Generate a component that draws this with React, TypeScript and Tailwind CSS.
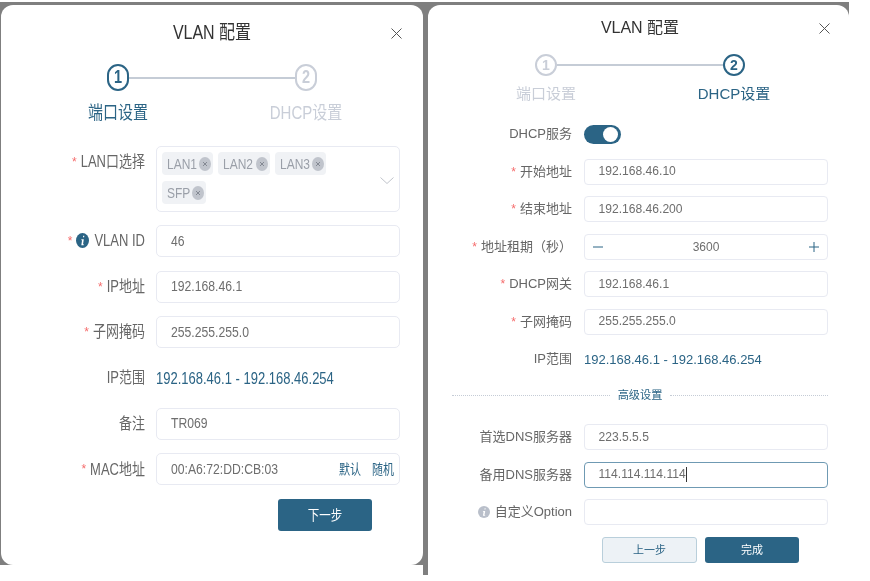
import React from "react";

const P = "text-[#2b6485]";

function Tall({ children }: { children: React.ReactNode }) {
  return <span className="inline-block scale-y-[1.22]">{children}</span>;
}

function Close({ className }: { className: string }) {
  return (
    <svg viewBox="0 0 11 11" className={`w-[11px] h-[11px] justify-self-end ${className}`} fill="none" stroke="#555" strokeWidth="1">
      <path d="M0.5 0.5L10.5 10.5M10.5 0.5L0.5 10.5" />
    </svg>
  );
}

function Star() {
  return <span className="text-[#f56c6c] text-[12px] mr-[4px]">*</span>;
}

function Info({ on, tall }: { on?: boolean; tall?: boolean }) {
  return (
    <svg viewBox="0 0 12 12" preserveAspectRatio="none" className={`${tall ? "w-[13px] h-[15px]" : "w-[12px] h-[12px]"} mr-[5px] shrink-0`}>
      <circle cx="6" cy="6" r="6" fill={on ? "#2b6485" : "#b9bfca"} />
      <path d="M6.6 2.2h1.1l-.2 1.2H6.4zM5 5h2.2L6.5 9h.7l-.1.8H4.9L5.6 5.8H4.9z" fill="#fff" />
    </svg>
  );
}

function Tag({ t, w }: { t: string; w: string }) {
  return (
    <div className={`${w} h-[23px] rounded-[4px] bg-[#f0f2f5] flex items-center justify-between pl-[5px] pr-[2px] text-[12px] text-[#9a9fa8]`}>
      <Tall>{t}</Tall>
      <svg viewBox="0 0 12 14" className="w-[12px] h-[14px]">
        <ellipse cx="6" cy="7" rx="6" ry="7" fill="#c0c4cc" />
        <path d="M4 5l4 4M8 5l-4 4" stroke="#7d828c" strokeWidth="0.9" />
      </svg>
    </div>
  );
}

function Row1({ label, star, info, children }: { label: string; star?: boolean; info?: boolean; children: React.ReactNode }) {
  return (
    <div className="h-[45.7px] flex items-center">
      <div className="w-[144px] flex items-center justify-end text-[13px] text-[#666] shrink-0">
        {star && <Star />}
        {info && <Info on tall />}
        <Tall>{label}</Tall>
      </div>
      <div className="ml-[11px] w-[244px]">{children}</div>
    </div>
  );
}

function Input1({ v, children }: { v: string; children?: React.ReactNode }) {
  return (
    <div className="h-[32px] rounded-[5px] border border-[#e8eaf2] bg-white flex items-center justify-between pl-[14px] pr-[5px] text-[12.2px] text-[#6e6e6e]">
      <Tall>{v}</Tall>
      {children}
    </div>
  );
}

function Row2({ label, star, info, children }: { label: string; star?: boolean; info?: boolean; children: React.ReactNode }) {
  return (
    <div className="h-[37.5px] flex items-center">
      <div className="w-[144px] flex items-center justify-end text-[13px] text-[#666] shrink-0">
        {star && <Star />}
        {info && <Info />}
        <span>{label}</span>
      </div>
      <div className="ml-[12px] w-[244px]">{children}</div>
    </div>
  );
}

function Input2({ v, focus }: { v?: string; focus?: boolean }) {
  return (
    <div className={`h-[26px] rounded-[4px] border ${focus ? "border-[#6f9ab3]" : "border-[#e8eaf2]"} bg-white flex items-center pl-[13.5px] text-[12.1px] text-[#6e6e6e]`}>
      <span>{v}</span>
      {focus && <span className="w-px h-[15px] bg-[#333]" />}
    </div>
  );
}

function Dialog1() {
  return (
    <div className="w-[422px] h-[560px] rounded-[12px] bg-white pt-[16px]">
      <div className="h-[20px] grid grid-cols-[1fr_auto_1fr] items-center">
        <span />
        <span className="text-[16px] text-[#333]"><Tall>VLAN 配置</Tall></span>
        <Close className="mr-[21px]" />
      </div>
      <div className="mt-[23px] ml-[106px] flex items-center">
        <div className={`w-[22px] h-[27px] rounded-full border-2 border-[#2b6485] flex items-center justify-center text-[14.5px] font-bold ${P}`}><Tall>1</Tall></div>
        <div className="w-[166px] h-[2px] bg-[#c5ccd6]" />
        <div className="w-[22px] h-[27px] rounded-full border-2 border-[#c9ced8] flex items-center justify-center text-[14.5px] font-bold text-[#c9ced8]"><Tall>2</Tall></div>
      </div>
      <div className="mt-[12px] ml-[57px] flex gap-[68px] h-[20px] items-center text-[15px]">
        <div className={`w-[120px] text-center ${P}`}><Tall>端口设置</Tall></div>
        <div className="w-[120px] text-center text-[#c9ced8]"><Tall>DHCP设置</Tall></div>
      </div>
      <div className="mt-[23px] flex items-start">
        <div className="w-[144px] mt-[6px] flex items-center justify-end text-[13px] text-[#666]">
          <Star />
          <Tall>LAN口选择</Tall>
        </div>
        <div className="ml-[11px] w-[244px] h-[66px] rounded-[5px] border border-[#e8eaf2] pl-[5px] pt-[5px] pr-[5px] flex items-center">
          <div className="flex flex-wrap gap-x-[5px] gap-y-[6px] w-[170px] self-start">
            <Tag t="LAN1" w="w-[51px]" />
            <Tag t="LAN2" w="w-[52px]" />
            <Tag t="LAN3" w="w-[51px]" />
            <Tag t="SFP" w="w-[44px]" />
          </div>
          <svg viewBox="0 0 14 7" className="w-[14px] h-[7px] ml-auto mt-[-2px]" fill="none" stroke="#c0c4cc" strokeWidth="1">
            <path d="M0.5 0.5L7 6.5L13.5 0.5" />
          </svg>
        </div>
      </div>
      <div className="mt-[6px]">
        <Row1 label="VLAN ID" star info><Input1 v="46" /></Row1>
        <Row1 label="IP地址" star><Input1 v="192.168.46.1" /></Row1>
        <Row1 label="子网掩码" star><Input1 v="255.255.255.0" /></Row1>
        <Row1 label="IP范围"><span className={`text-[13px] ${P}`}><Tall>192.168.46.1 - 192.168.46.254</Tall></span></Row1>
        <Row1 label="备注"><Input1 v="TR069" /></Row1>
        <Row1 label="MAC地址" star>
          <Input1 v="00:A6:72:DD:CB:03">
            <span className={`text-[11px] ${P} flex gap-[11px]`}><Tall>默认</Tall><Tall>随机</Tall></span>
          </Input1>
        </Row1>
      </div>
      <div className="mt-[7px] ml-[277px] w-[94px] h-[32px] rounded-[3px] bg-[#2b6485] flex items-center justify-center text-[11.5px] text-white">
        <Tall>下一步</Tall>
      </div>
    </div>
  );
}

function Dialog2() {
  return (
    <div className="w-[421px] h-full rounded-t-[12px] bg-white pt-[11px]">
      <div className="h-[20px] grid grid-cols-[1fr_auto_1fr] items-center pl-[3px]">
        <span />
        <span className="text-[16px] text-[#333]">VLAN 配置</span>
        <Close className="mr-[19px]" />
      </div>
      <div className="mt-[18px] ml-[107px] flex items-center">
        <div className="w-[22px] h-[22px] rounded-full border-2 border-[#c9ced8] flex items-center justify-center text-[14px] font-bold text-[#c9ced8]">1</div>
        <div className="w-[166px] h-[2px] bg-[#c5ccd6]" />
        <div className={`w-[22px] h-[22px] rounded-full border-2 border-[#2b6485] flex items-center justify-center text-[14px] font-bold ${P}`}>2</div>
      </div>
      <div className="mt-[8px] ml-[58px] flex gap-[68px] h-[20px] items-center text-[15px]">
        <div className="w-[120px] text-center text-[#c9ced8]">端口设置</div>
        <div className={`w-[120px] text-center ${P}`}>DHCP设置</div>
      </div>
      <div className="mt-[11.25px]">
        <Row2 label="DHCP服务">
          <div className="w-[37px] h-[19px] rounded-full bg-[#2b6485] flex items-center justify-end pr-[3px]">
            <div className="w-[15px] h-[15px] rounded-full bg-white" />
          </div>
        </Row2>
        <Row2 label="开始地址" star><Input2 v="192.168.46.10" /></Row2>
        <Row2 label="结束地址" star><Input2 v="192.168.46.200" /></Row2>
        <Row2 label="地址租期（秒）" star>
          <div className="h-[26px] rounded-[4px] border border-[#e8eaf2] flex items-center justify-between px-[8px] text-[12px] text-[#6e6e6e]">
            <svg viewBox="0 0 10 10" className="w-[10px] h-[10px]" stroke="#2b6485" strokeWidth="1"><path d="M0 5H10" /></svg>
            <span>3600</span>
            <svg viewBox="0 0 10 10" className="w-[10px] h-[10px]" stroke="#2b6485" strokeWidth="1"><path d="M0 5H10M5 0V10" /></svg>
          </div>
        </Row2>
        <Row2 label="DHCP网关" star><Input2 v="192.168.46.1" /></Row2>
        <Row2 label="子网掩码" star><Input2 v="255.255.255.0" /></Row2>
        <Row2 label="IP范围"><span className={`text-[13px] ${P}`}>192.168.46.1 - 192.168.46.254</span></Row2>
      </div>
      <div className="mt-[7.25px] ml-[24px] w-[376px] h-[20px] flex items-center gap-[7px]">
        <div className="flex-1 border-t border-dotted border-[#c5ccd6]" />
        <span className={`text-[11.2px] px-[1px] ${P}`}>高级设置</span>
        <div className="flex-1 border-t border-dotted border-[#c5ccd6]" />
      </div>
      <div className="mt-[13.25px]">
        <Row2 label="首选DNS服务器"><Input2 v="223.5.5.5" /></Row2>
        <Row2 label="备用DNS服务器"><Input2 v="114.114.114.114" focus /></Row2>
        <Row2 label="自定义Option" info><Input2 /></Row2>
      </div>
      <div className="mt-[6.25px] ml-[174px] flex gap-[8px] text-[11px]">
        <div className={`w-[95px] h-[26px] rounded-[3px] bg-[#edf2f6] border border-[#b9cfdb] flex items-center justify-center ${P}`}>上一步</div>
        <div className="w-[94px] h-[26px] rounded-[3px] bg-[#2b6485] flex items-center justify-center text-white">完成</div>
      </div>
    </div>
  );
}

export default function App() {
  return (
    <div className="w-[870px] h-[581px] bg-white overflow-hidden pt-[2px] [font-family:'Liberation_Sans','Noto_Sans_CJK_SC',sans-serif] blur-[0.4px]">
      <div className="flex items-start">
        <div className="w-[423px] h-[563px] bg-[#7f7f7f] pt-[3px] pl-[1px]">
          <Dialog1 />
        </div>
        <div className="w-[426px] h-[573px] bg-[#7f7f7f] pt-[3px] pl-[5px]">
          <Dialog2 />
        </div>
      </div>
    </div>
  );
}
